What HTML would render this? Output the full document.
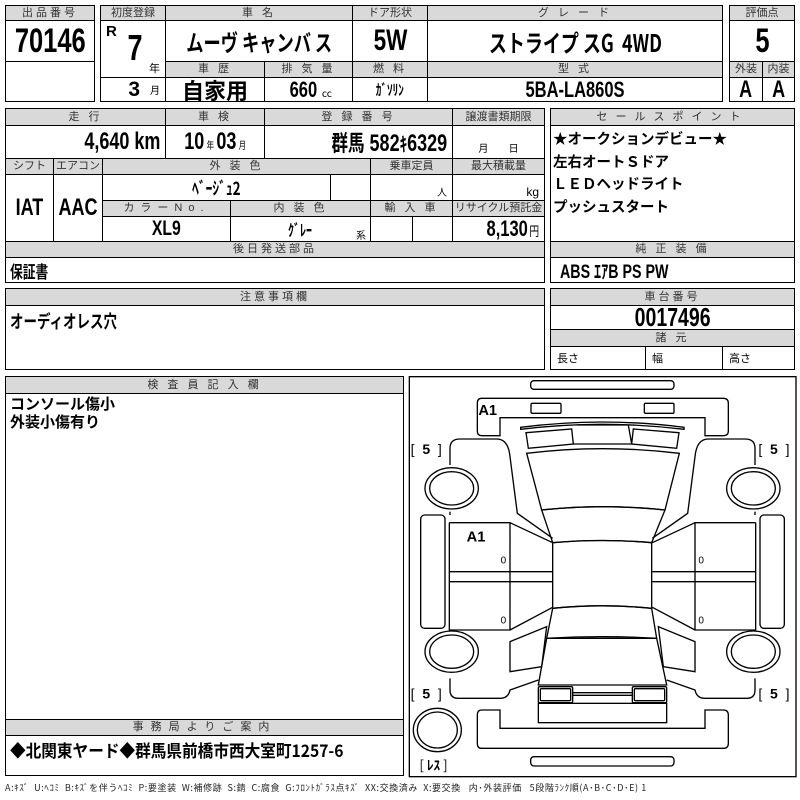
<!DOCTYPE html>
<html><head><meta charset="utf-8">
<style>
*{margin:0;padding:0;box-sizing:border-box}
body{width:800px;height:800px;background:#fff;position:relative;overflow:hidden;font-family:"Liberation Sans","Noto Sans CJK JP",sans-serif;color:#000}
.c{position:absolute;border:1px solid #000;display:flex;align-items:center;justify-content:center;white-space:nowrap;overflow:hidden}
.h{background:#d9d9d9;font-size:11px;color:#333;letter-spacing:3px;line-height:1}
.b{font-family:"Liberation Sans","Noto Sans CJK JP",sans-serif;font-weight:bold}
.j{font-family:"Noto Sans CJK JP",sans-serif;font-weight:bold}
.l{justify-content:flex-start;padding-left:4px}
.r{justify-content:flex-end;padding-right:5px}
.s{font-size:10px;font-weight:normal;font-family:"Noto Sans CJK JP",sans-serif}
.n{display:inline-block;transform:scaleX(.75)}
.nr{display:inline-block;transform:scaleX(.75);transform-origin:right center}
.nl{display:inline-block;transform:scaleX(.75);transform-origin:left center}
</style></head><body>
<div class="c h" style="left:5px;top:5px;width:90px;height:16px">出品番号</div>
<div class="c b" style="left:5px;top:20px;width:90px;height:42px;font-size:34px"><span class="n">70146</span></div>
<div class="c" style="left:5px;top:61px;width:90px;height:41px"></div>
<div class="c h" style="left:100px;top:5px;width:66px;height:16px;letter-spacing:0">初度登録</div>
<div class="c h" style="left:165px;top:5px;width:188px;height:16px">車 名</div>
<div class="c h" style="left:352px;top:5px;width:76px;height:16px;letter-spacing:0">ドア形状</div>
<div class="c h" style="left:427px;top:5px;width:296px;height:16px">グ レ ー ド</div>
<div class="c" style="left:100px;top:20px;width:66px;height:58px">
 <span class="b" style="position:absolute;left:5px;top:2px;font-size:15px">R</span>
 <span class="b" style="position:absolute;left:24px;top:6px;font-size:36px"><span class="n">7</span></span>
 <span class="s" style="position:absolute;right:5px;bottom:1px;font-size:11px">年</span></div>
<div class="c j" style="left:165px;top:20px;width:188px;height:42px;font-size:23px"><span class="n">ムーヴ キャンバ ス</span></div>
<div class="c b" style="left:352px;top:20px;width:76px;height:42px;font-size:30px"><span class="n">5W</span></div>
<div class="c j" style="left:427px;top:20px;width:296px;height:42px;font-size:24px"><span class="n">ストライプ スG&nbsp; 4WD</span></div>
<div class="c h" style="left:165px;top:61px;width:100px;height:17px">車 歴</div>
<div class="c h" style="left:264px;top:61px;width:89px;height:17px">排 気 量</div>
<div class="c h" style="left:352px;top:61px;width:76px;height:17px">燃 料</div>
<div class="c h" style="left:427px;top:61px;width:296px;height:17px">型 式</div>
<div class="c r" style="left:100px;top:77px;width:66px;height:25px"><span class="b" style="font-size:21px">3</span><span class="s" style="margin-left:10px">月</span></div>
<div class="c j" style="left:165px;top:77px;width:100px;height:25px;font-size:22px">自家用</div>
<div class="c b" style="left:264px;top:77px;width:89px;height:25px;font-size:22px"><span class="n">660</span><span class="s" style="margin-top:6px">cc</span></div>
<div class="c j" style="left:352px;top:77px;width:76px;height:25px;font-size:15px"><span class="n">ｶﾞｿﾘﾝ</span></div>
<div class="c b" style="left:427px;top:77px;width:296px;height:25px;font-size:22px"><span class="n">5BA-LA860S</span></div>
<div class="c h" style="left:729px;top:5px;width:66px;height:16px;letter-spacing:0">評価点</div>
<div class="c b" style="left:729px;top:20px;width:66px;height:42px;font-size:34px"><span class="n">5</span></div>
<div class="c h" style="left:729px;top:61px;width:34px;height:17px;letter-spacing:0">外装</div>
<div class="c h" style="left:762px;top:61px;width:33px;height:17px;letter-spacing:0">内装</div>
<div class="c b" style="left:729px;top:77px;width:34px;height:25px;font-size:24px"><span class="n">A</span></div>
<div class="c b" style="left:762px;top:77px;width:33px;height:25px;font-size:24px"><span class="n">A</span></div>
<div class="c h" style="left:5px;top:108px;width:161px;height:18px">走 行</div>
<div class="c h" style="left:165px;top:108px;width:100px;height:18px">車 検</div>
<div class="c h" style="left:264px;top:108px;width:189px;height:18px">登 録 番 号</div>
<div class="c h" style="left:452px;top:108px;width:93px;height:18px;letter-spacing:0">譲渡書類期限</div>
<div class="c b r" style="left:5px;top:125px;width:161px;height:34px;font-size:24px"><span class="nr">4,640 km</span></div>
<div class="c b" style="left:165px;top:125px;width:100px;height:34px;font-size:24px"><span class="n">10<span class="s" style="margin:0 3px">年</span>03<span class="s" style="margin-left:3px">月</span></span></div>
<div class="c b r" style="left:264px;top:125px;width:189px;height:34px;font-size:24px"><span class="nr"><span class="j" style="font-size:22px">群馬</span>&nbsp;582<span class="j" style="font-size:20px">ｷ</span>6329</span></div>
<div class="c" style="left:452px;top:125px;width:93px;height:34px"><span class="s" style="margin-top:10px">月&nbsp;&nbsp;&nbsp;&nbsp;&nbsp;&nbsp;&nbsp;&nbsp;&nbsp;日</span></div>
<div class="c h" style="left:5px;top:158px;width:49px;height:17px;letter-spacing:0">シフト</div>
<div class="c h" style="left:53px;top:158px;width:50px;height:17px;letter-spacing:0">エアコン</div>
<div class="c h" style="left:102px;top:158px;width:269px;height:17px">外 装 色</div>
<div class="c h" style="left:370px;top:158px;width:83px;height:17px;letter-spacing:0">乗車定員</div>
<div class="c h" style="left:452px;top:158px;width:93px;height:17px;letter-spacing:0">最大積載量</div>
<div class="c b" style="left:5px;top:174px;width:49px;height:68px;font-size:24px"><span class="n">IAT</span></div>
<div class="c b" style="left:53px;top:174px;width:50px;height:68px;font-size:24px"><span class="n">AAC</span></div>
<div class="c j" style="left:102px;top:174px;width:229px;height:27px;font-size:18px"><span class="n">ﾍﾞｰｼﾞｭ2</span></div>
<div class="c" style="left:330px;top:174px;width:41px;height:27px"></div>
<div class="c r" style="left:370px;top:174px;width:83px;height:27px"><span class="s" style="margin-top:8px">人</span></div>
<div class="c r" style="left:452px;top:174px;width:93px;height:27px"><span style="font-size:12px;margin-top:8px">kg</span></div>
<div class="c h" style="left:102px;top:200px;width:129px;height:17px;letter-spacing:6px">カラーNo.</div>
<div class="c h" style="left:230px;top:200px;width:141px;height:17px">内 装 色</div>
<div class="c h" style="left:370px;top:200px;width:83px;height:17px">輸 入 車</div>
<div class="c h" style="left:452px;top:200px;width:93px;height:17px;letter-spacing:0">リサイクル預託金</div>
<div class="c b" style="left:102px;top:216px;width:129px;height:26px;font-size:21px"><span class="n">XL9</span></div>
<div class="c j" style="left:230px;top:216px;width:141px;height:26px;font-size:16px"><span class="n">ｸﾞﾚｰ</span><span class="s" style="position:absolute;right:4px;top:10px">系</span></div>
<div class="c" style="left:370px;top:216px;width:43px;height:26px"></div>
<div class="c" style="left:412px;top:216px;width:41px;height:26px"></div>
<div class="c b r" style="left:452px;top:216px;width:93px;height:26px;font-size:22px"><span class="nr">8,130<span class="s" style="margin-left:2px;font-size:13px">円</span></span></div>
<div class="c h" style="left:5px;top:241px;width:540px;height:17px">後日発送部品</div>
<div class="c j l" style="left:5px;top:257px;width:540px;height:26px;font-size:17px"><span class="nl">保証書</span></div>
<div class="c h" style="left:550px;top:108px;width:245px;height:18px;letter-spacing:8px">セールスポイント</div>
<div class="c" style="left:550px;top:125px;width:245px;height:117px;display:block;padding:2px 0 0 2px;font-family:'Noto Sans CJK JP',sans-serif;font-weight:bold;font-size:14.5px;line-height:22.5px">★オークションデビュー★<br>左右オートＳドア<br>ＬＥＤヘッドライト<br>プッシュスタート</div>
<div class="c h" style="left:550px;top:241px;width:245px;height:17px">純 正 装 備</div>
<div class="c b l" style="left:550px;top:257px;width:245px;height:26px;font-size:19px;padding-left:9px"><span class="nl">ABS ｴｱB PS PW</span></div>
<div class="c h" style="left:5px;top:288px;width:540px;height:18px">注意事項欄</div>
<div class="c j" style="left:5px;top:305px;width:540px;height:65px;font-size:18px;align-items:flex-start;justify-content:flex-start;padding:2px 0 0 4px"><span class="nl">オーディオレス穴</span></div>
<div class="c h" style="left:550px;top:288px;width:245px;height:18px">車台番号</div>
<div class="c b" style="left:550px;top:305px;width:245px;height:25px;font-size:26px"><span class="n">0017496</span></div>
<div class="c h" style="left:550px;top:329px;width:245px;height:18px">諸 元</div>
<div class="c l s" style="left:550px;top:346px;width:96px;height:24px;font-size:11px;padding-left:6px">長さ</div>
<div class="c l s" style="left:645px;top:346px;width:78px;height:24px;font-size:11px;padding-left:6px">幅</div>
<div class="c l s" style="left:722px;top:346px;width:73px;height:24px;font-size:11px;padding-left:6px">高さ</div>
<div class="c h" style="left:5px;top:376px;width:399px;height:18px">検 査 員 記 入 欄</div>
<div class="c j" style="left:5px;top:393px;width:399px;height:327px;display:block;padding:1px 0 0 4px;font-size:15px;line-height:18px">コンソール傷小<br>外装小傷有り</div>
<div class="c h" style="left:5px;top:719px;width:399px;height:17px;letter-spacing:7px">事務局よりご案内</div>
<div class="c j l" style="left:5px;top:735px;width:399px;height:41px;font-size:17px;align-items:flex-start;padding-top:1px"><span class="nl" style="transform:scaleX(.92)">◆北関東ヤード◆群馬県前橋市西大室町1257-6</span></div>
<div style="position:absolute;left:5px;top:781px;font-size:9px;font-family:'Noto Sans CJK JP',sans-serif;white-space:nowrap;color:#222;letter-spacing:0.6px">A:ｷｽﾞ&nbsp; U:ﾍｺﾐ&nbsp; B:ｷｽﾞを伴うﾍｺﾐ&nbsp; P:要塗装&nbsp; W:補修跡&nbsp; S:錆&nbsp; C:腐食&nbsp; G:ﾌﾛﾝﾄｶﾞﾗｽ点ｷｽﾞ&nbsp; XX:交換済み&nbsp; X:要交換&nbsp;&nbsp; 内･外装評価&nbsp;&nbsp; 5段階ﾗﾝｸ順(A･B･C･D･E) 1</div>
<svg style="position:absolute;left:400px;top:370px" width="400" height="430" viewBox="0 0 1200 1290" fill="none" stroke="#000" stroke-width="4">
<rect x="28" y="20" width="1160" height="1200"/>
<rect x="392" y="32" width="430" height="26" rx="10"/>
<path d="M245,85 H970 Q985,85 985,100 V183 Q985,197 970,197 H915 V143 H300 V197 H245 Q232,197 232,183 V100 Q232,85 245,85 Z"/>
<rect x="393" y="100" width="90" height="30" rx="4"/>
<rect x="733" y="100" width="89" height="30" rx="4"/>
<path d="M362,172 Q607,140 852,172 L852,178 Q607,148 362,178 Z"/>
<path d="M378,188 L515,177 L520,222 L385,235 Z"/>
<path d="M837,188 L700,177 L695,222 L830,235 Z"/>
<path d="M530,165 L685,165 L695,222 L520,222"/>
<path d="M380,250 Q607,222 838,250 L795,420 Q607,400 425,420 Z"/>
<path d="M425,420 Q607,400 795,420 L755,518 Q607,505 458,518 Z"/>
<path d="M458,518 Q607,505 755,518 V715 Q607,700 458,715 Z"/>
<path d="M458,715 Q607,700 755,715 L770,805 Q607,795 440,805 Z"/>
<path d="M440,805 L770,805 L800,945 L415,945 Z"/>
<rect x="415" y="950" width="103" height="48" rx="4"/>
<rect x="421" y="956" width="91" height="36" rx="3"/>
<rect x="697" y="950" width="103" height="48" rx="4"/>
<rect x="703" y="956" width="91" height="36" rx="3"/>
<path d="M518,968 H697 M518,976 H697"/>
<rect x="415" y="1000" width="385" height="58"/>
<path d="M245,1020 H300 V1075 H915 V1020 H970 Q985,1020 985,1035 V1120 Q985,1135 970,1135 H245 Q232,1135 232,1120 V1035 Q232,1020 245,1020Z"/>
<rect x="392" y="1160" width="430" height="28" rx="10"/>
<g id="side">
<path d="M150,285 V235 Q150,207 180,207 H290 Q325,207 330,260 L352,430 L458,505"/>
<path d="M150,425 V435"/>
<rect x="62" y="435" width="73" height="340" rx="12"/>
<path d="M148,458 H330 V605 M148,458 V780 H330 V635 M148,605 H458 M148,635 H458 M330,458 L458,518 M330,780 L458,712"/>
<path d="M330,605 V635"/>
<path d="M330,815 L440,770 L425,890 L330,905 Z"/>
<path d="M150,925 V960 Q150,985 175,985 H300 Q325,985 330,960 L415,930"/>
<ellipse cx="155" cy="355" rx="80" ry="62"/>
<ellipse cx="155" cy="355" rx="66" ry="50"/>
<ellipse cx="155" cy="845" rx="80" ry="62"/>
<ellipse cx="155" cy="845" rx="66" ry="50"/>
</g>
<use href="#side" transform="translate(1215,0) scale(-1,1)"/>
<ellipse cx="112" cy="1080" rx="72" ry="65"/>
<ellipse cx="112" cy="1080" rx="60" ry="54"/>
<g fill="#000" stroke="none" font-family="Liberation Sans,sans-serif" font-weight="bold">
<text x="235" y="135" font-size="44">A1</text>
<text x="200" y="515" font-size="44">A1</text>
<text x="302" y="580" font-size="30" font-weight="normal">0</text>
<text x="302" y="760" font-size="30" font-weight="normal">0</text>
<text x="895" y="580" font-size="30" font-weight="normal">0</text>
<text x="895" y="760" font-size="30" font-weight="normal">0</text>
<text x="32" y="252" font-size="42" font-weight="normal" xml:space="preserve">[  <tspan font-weight="bold">5</tspan>  ]</text>
<text x="1075" y="252" font-size="42" font-weight="normal" xml:space="preserve">[  <tspan font-weight="bold">5</tspan>  ]</text>
<text x="32" y="985" font-size="42" font-weight="normal" xml:space="preserve">[  <tspan font-weight="bold">5</tspan>  ]</text>
<text x="1075" y="985" font-size="42" font-weight="normal" xml:space="preserve">[  <tspan font-weight="bold">5</tspan>  ]</text>
<text x="58" y="1200" font-size="40" font-weight="normal" font-family="Noto Sans CJK JP,sans-serif">[ <tspan font-weight="bold">ﾚｽ</tspan> ]</text>
</g>
</svg>
</body></html>
